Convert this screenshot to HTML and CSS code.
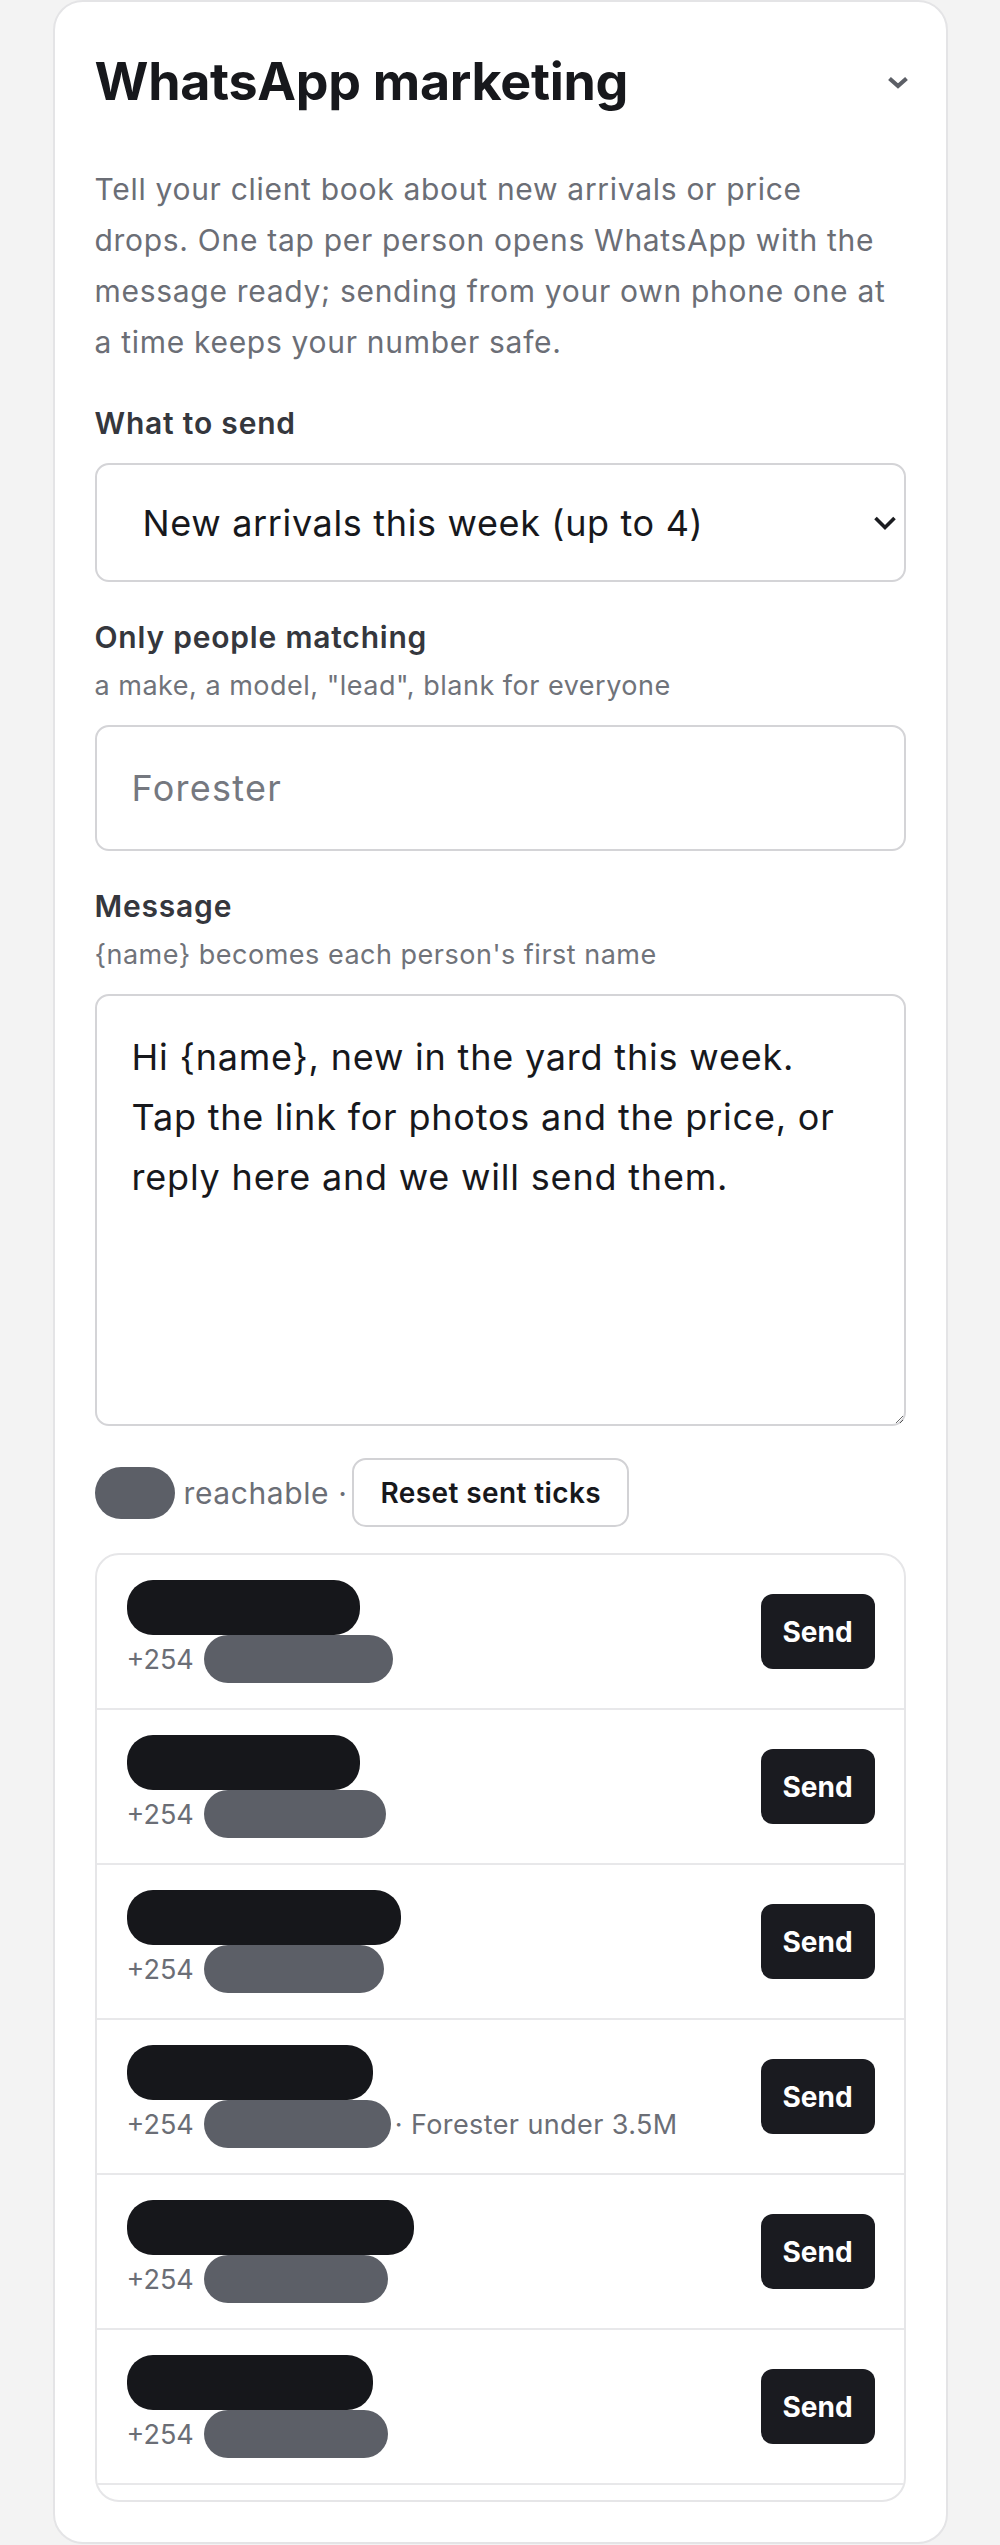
FILE: index.html
```html
<!DOCTYPE html>
<html lang="en">
<head>
    <meta charset="UTF-8">
    <meta name="viewport" content="width=device-width, initial-scale=1.0">
    <title>WhatsApp marketing</title>
    <link rel="stylesheet" href="styles.css">
</head>
<body>
    <div class="card">
        <div class="card-head">
            <h2>WhatsApp marketing</h2>
            <svg class="head-chevron" width="22" height="13" viewBox="0 0 22 13">
                <polyline points="2.5,2.5 11,10 19.5,2.5" fill="none" stroke="#5c5f66" stroke-width="4.2" stroke-linejoin="miter" stroke-linecap="butt"/>
            </svg>
        </div>

        <p class="intro">Tell your client book about new arrivals or price<br>
            drops. One tap per person opens WhatsApp with the<br>
            message ready; sending from your own phone one at<br>
            a time keeps your number safe.</p>

        <div class="field">
            <label for="what">What to send</label>
            <div class="select-wrap">
                <select id="what">
                    <option>New arrivals this week (up to 4)</option>
                    <option>Price drops</option>
                    <option>Custom message only</option>
                </select>
                <svg class="select-chevron" width="24" height="16" viewBox="0 0 24 16">
                    <polyline points="2.5,3 12,12.5 21.5,3" fill="none" stroke="#1b1c20" stroke-width="3.6"/>
                </svg>
            </div>
        </div>

        <div class="field">
            <label for="match">Only people matching</label>
            <p class="hint">a make, a model, "lead", blank for everyone</p>
            <input type="text" id="match" class="control" placeholder="Forester">
        </div>

        <div class="field">
            <label for="message">Message</label>
            <p class="hint">{name} becomes each person's first name</p>
            <textarea id="message" class="control">Hi {name}, new in the yard this week.
Tap the link for photos and the price, or reply here and we will send them.</textarea>
        </div>

        <div class="status-row">
            <span class="redact redact-grey count"></span>
            <span class="status-text">reachable ·</span>
            <button class="btn-outline">Reset sent ticks</button>
        </div>

        <div class="people">
            <div class="person">
                <div class="who">
                    <span class="redact redact-dark name" style="width:233px"></span>
                    <div class="phone"><span>+254</span><span class="redact redact-grey num" style="width:189px"></span></div>
                </div>
                <button class="btn-send">Send</button>
            </div>
            <div class="person">
                <div class="who">
                    <span class="redact redact-dark name" style="width:233px"></span>
                    <div class="phone"><span>+254</span><span class="redact redact-grey num" style="width:182px"></span></div>
                </div>
                <button class="btn-send">Send</button>
            </div>
            <div class="person">
                <div class="who">
                    <span class="redact redact-dark name" style="width:274px"></span>
                    <div class="phone"><span>+254</span><span class="redact redact-grey num" style="width:180px"></span></div>
                </div>
                <button class="btn-send">Send</button>
            </div>
            <div class="person">
                <div class="who">
                    <span class="redact redact-dark name" style="width:246px"></span>
                    <div class="phone"><span>+254</span><span class="redact redact-grey num" style="width:187px"></span><span class="note">· Forester under 3.5M</span></div>
                </div>
                <button class="btn-send">Send</button>
            </div>
            <div class="person">
                <div class="who">
                    <span class="redact redact-dark name" style="width:287px"></span>
                    <div class="phone"><span>+254</span><span class="redact redact-grey num" style="width:184px"></span></div>
                </div>
                <button class="btn-send">Send</button>
            </div>
            <div class="person">
                <div class="who">
                    <span class="redact redact-dark name" style="width:246px"></span>
                    <div class="phone"><span>+254</span><span class="redact redact-grey num" style="width:184px"></span></div>
                </div>
                <button class="btn-send">Send</button>
            </div>
            <div class="person person-more"></div>
        </div>
    </div>
</body>
</html>
```

FILE: styles.css
```css
body {
    margin: 0;
    background-color: #f3f3f3;
    font-family: Inter, "Liberation Sans", sans-serif;
    color: #17181c;
}
.card {
    width: 895px;
    box-sizing: border-box;
    margin: 0 auto 1px;
    background-color: #fff;
    border: 2px solid #e4e4e6;
    border-radius: 30px;
    padding: 49px 40px 40px;
}
.card-head {
    display: flex;
    justify-content: space-between;
    align-items: center;
}
.card-head h2 {
    margin: 0;
    font-size: 52px;
    line-height: 62px;
    font-weight: 700;
    letter-spacing: -0.3px;
    color: #17181c;
}
.head-chevron {
    margin-right: -3px;
    display: block;
}
.intro {
    margin: 51px 0 0;
    font-size: 30px;
    line-height: 51px;
    letter-spacing: 0.7px;
    color: #6b6e76;
}
.field {
    margin-top: 36px;
}
label {
    display: block;
    font-size: 30px;
    line-height: 39px;
    font-weight: 600;
    letter-spacing: 0.8px;
    color: #35373d;
}
.hint {
    margin: 10px 0 0;
    font-size: 27px;
    line-height: 38px;
    letter-spacing: 0.5px;
    color: #70737a;
}
.select-wrap {
    position: relative;
    margin-top: 20px;
}
select {
    display: block;
    width: 100%;
    height: 119px;
    box-sizing: border-box;
    appearance: none;
    -webkit-appearance: none;
    background-color: #fff;
    border: 2px solid #d4d4d7;
    border-radius: 14px;
    padding: 0 60px 0 46px;
    font-family: inherit;
    font-size: 36px;
    letter-spacing: 0.65px;
    color: #17181c;
}
.select-chevron {
    position: absolute;
    right: 9px;
    top: 52px;
    pointer-events: none;
}
.control {
    display: block;
    width: 100%;
    box-sizing: border-box;
    margin-top: 20px;
    border: 2px solid #d4d4d7;
    border-radius: 14px;
    background-color: #fff;
    font-family: inherit;
    font-size: 36px;
    color: #17181c;
    outline: none;
}
input.control {
    height: 126px;
    padding: 0 35px;
    letter-spacing: 1.3px;
}
input.control::placeholder {
    color: #75787f;
}
textarea.control {
    height: 432px;
    padding: 31px 35px;
    line-height: 60px;
    letter-spacing: 0.8px;
    resize: vertical;
}
.status-row {
    display: flex;
    align-items: center;
    gap: 9px;
    margin-top: 32px;
}
.status-text {
    font-size: 30px;
    letter-spacing: 0.6px;
    color: #6b6e76;
}
.redact {
    display: inline-block;
    border-radius: 26px;
}
.redact-dark {
    background-color: #16171b;
}
.redact-grey {
    background-color: #5c5f67;
}
.count {
    width: 80px;
    height: 52px;
}
.btn-outline {
    height: 69px;
    margin-left: -4px;
    padding: 0 26px;
    border: 2px solid #d2d2d5;
    border-radius: 14px;
    background-color: #fff;
    font-family: inherit;
    font-size: 28px;
    font-weight: 600;
    letter-spacing: 0.4px;
    color: #17181c;
    cursor: pointer;
}
.people {
    margin-top: 26px;
    border: 2px solid #e6e6e8;
    border-radius: 24px;
    height: 949px;
    box-sizing: border-box;
    overflow: hidden;
}
.person {
    display: flex;
    justify-content: space-between;
    align-items: center;
    padding: 25px 29px 25px 30px;
    height: 155px;
    box-sizing: border-box;
    border-bottom: 2px solid #e8e8ea;
}
.who {
    display: flex;
    flex-direction: column;
    align-items: flex-start;
}
.name {
    height: 55px;
}
.phone {
    display: flex;
    align-items: center;
    gap: 10px;
    height: 48px;
    font-size: 27px;
    color: #6b6e76;
}
.num {
    height: 48px;
    border-radius: 24px;
}
.note {
    margin-left: -6px;
    letter-spacing: 0.4px;
}
.btn-send {
    width: 114px;
    height: 75px;
    border: none;
    border-radius: 12px;
    background-color: #1a1b20;
    color: #fff;
    font-family: inherit;
    font-size: 28px;
    font-weight: 700;
    cursor: pointer;
}
```
